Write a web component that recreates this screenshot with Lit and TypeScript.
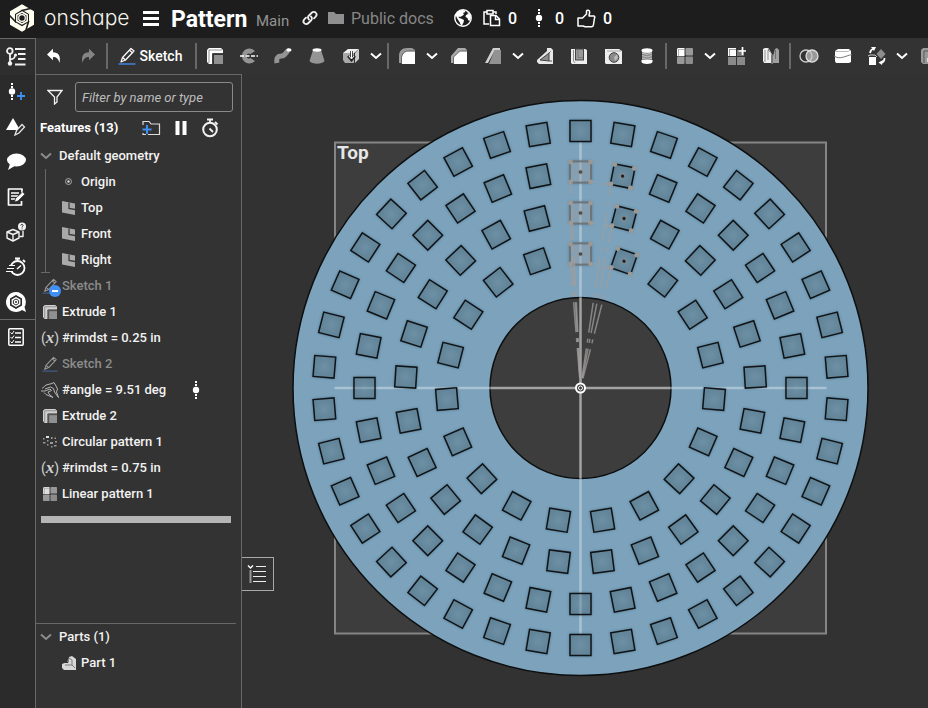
import { LitElement, html, css, svg, TemplateResult } from "lit";
import { customElement, property } from "lit/decorators.js";

const icon = (w: number, h: number, body: unknown, scale = 1) =>
  html`<svg class="ic" width=${Math.round(w * scale)} height=${Math.round(h * scale)} viewBox="0 0 ${w} ${h}" aria-hidden="true">${body}</svg>`;

const G = "#949494";

/* ---------- header icons ---------- */
const logo = icon(26, 28, svg`
  <path d="M13 .3L25 7.200V20.800L13 27.700L1 20.800V7.200Z" fill="#fffff0"/>
  <path d="M13 5.800L20 9.900V18.100L13 22.200L6 18.100V9.900Z" fill="#1d1d1d"/>
  ${[0, 120, 240].map((a) => svg`<path d="M12 6.800L25.500 3.500" stroke="#1d1d1d" stroke-width="1.600" transform="rotate(${a} 13 14)"/>`)}
  <path d="M13 8L18.200 11V17L13 20L7.800 17V11Z" fill="none" stroke="#fffff0" stroke-width="1.500"/>
  <circle cx="13" cy="14" r="3.300" fill="none" stroke="#fffff0" stroke-width="1.200"/>`);
const menuIcon = icon(16, 16, svg`<path d="M0 2.500H16M0 8.500H16M0 14.500H16" stroke="#fff" stroke-width="3"/>`);
const linkIcon = icon(16, 16, svg`<g fill="none" stroke="#eee" stroke-width="1.800" stroke-linecap="round">
  <path d="M7 9.500C5.500 8 6 6.500 7 5.500L9.500 3C11 1.500 13 1.800 13.800 2.800C15 4 14.500 5.800 13.500 6.800L12 8.300"/>
  <path d="M9 6.500C10.500 8 10 9.500 9 10.500L6.500 13C5 14.500 3 14.200 2.200 13.200C1 12 1.500 10.200 2.500 9.200L4 7.700"/></g>`);
const folderIcon = icon(16, 14, svg`<path d="M0 1H6L8 3H16V13H0Z" fill="#8f8f8f"/>`);
const globeIcon = icon(18, 18, svg`<circle cx="9" cy="9" r="8.200" fill="none" stroke="#fff" stroke-width="1.400"/>
  <path d="M1.500 6L4 2.500L8 1L10.500 1.500L11.500 3L9 4L10 5.500L8 7L6 8L4.500 7.500L5 9L7 9.500L10 11L9.500 13.500L8 16.500H7L5.500 13L3.500 10Z" fill="#fff"/>
  <path d="M13 3L16 5.500L17 9L15.500 12L14 11L13.500 9L11.500 8L12 6L14 5Z" fill="#fff"/>`);
const clipIcon = icon(18, 18, svg`<g fill="none" stroke="#fff" stroke-width="1.500">
  <path d="M6 15H1V3H4M10 3H13V5"/><path d="M4 1.500H10V5H4Z"/><path d="M7.500 6.500H13L16.500 10V16.500H7.500Z"/><path d="M12.500 6.500V10.500H16.500"/></g>`);
const versionIcon = icon(8, 20, svg`<circle cx="4" cy="10" r="3.200" fill="#fff"/><path d="M4 1V6M4 14V20" stroke="#fff" stroke-width="2" stroke-dasharray="2 1"/>`);
const thumbIcon = icon(19, 19, svg`<path d="M1 9H5.500L9.500 5V2C10 .8 12.500 1 12.700 3L12 7H17C18 7.500 18 8.500 17.500 9L16.500 15.500C16.300 17 15.500 17.800 14.500 17.800H8L6 17H1Z" fill="none" stroke="#fff" stroke-width="1.500" stroke-linejoin="round"/>`);

/* ---------- toolbar icons ---------- */
const undo = icon(16, 16, svg`<path d="M1 6.500L7 .8V4.300C12.500 4.300 15 8 13.500 15C12.500 10.800 10.500 9 7 9V12.200Z" fill="#fff"/>`);
const redo = icon(16, 16, svg`<path d="M15 6.500L9 .8V4.300C3.500 4.300 1 8 2.500 15C3.500 10.800 5.500 9 9 9V12.200Z" fill="#858585"/>`);
const pencil = (c: string, line: string, scale = 1) => icon(18, 18, svg`<g fill="none" stroke=${c} stroke-width="1.200" stroke-linejoin="round">
  <path d="M3 15L4.500 10.500L13 1.500L16 4L7.500 13Z"/><path d="M4.500 10.500L7.500 13M11.500 3.200L14.500 5.700"/></g><path d="M.5 17H17.500" stroke=${line} stroke-width="1.300"/>`, scale);
const extrude = (a: string, scale = 1) => icon(16, 16, svg`<path d="M0 2L2 0H14L16 2V6H6V16H2L0 14Z" fill=${a}/><path d="M2 2H15M2 2V15" stroke="#666" stroke-width=".700"/><rect x="7" y="7" width="9" height="9" fill="#909090"/><path d="M5.500 16V5.500H16" fill="none" stroke="#444"/>`, scale);
const revolve = icon(18, 16, svg`<path d="M15 3A7.500 7.500 0 1 0 15 13L10.500 10A2.500 2.500 0 1 1 10.500 6Z" fill=${G}/><path d="M7 8H18" stroke="#333" stroke-width="3"/><path d="M0 8H18" stroke="#fff" stroke-width="1.300" stroke-dasharray="4 1.500"/>`);
const sweep = icon(18, 18, svg`<path d="M3 16C2 10.500 4 9 7.500 9C12 9 11.500 4 15 3.500" fill="none" stroke=${G} stroke-width="5"/><ellipse cx="15" cy="3" rx="2.500" ry="1.800" fill="#fff"/>`);
const loft = icon(16, 16, svg`<path d="M4 2H12L15.500 13C13 16.500 3 16.500 .500 13Z" fill=${G}/><ellipse cx="8" cy="2" rx="4.500" ry="1.700" fill="#fff"/>`);
const thicken = icon(18, 16, svg`<path d="M1 5L6 1H17L12 5Z" fill="#eee"/><path d="M1 5H12V15H3L1 12Z" fill="#a8a8a8"/><path d="M13 5L17 1V11L13 15Z" fill="#c8c8c8"/><path d="M9.500 3V9M6 8L9.500 12L13 8" stroke="#222" stroke-width="2.500" fill="none"/><path d="M9.500 3V10M7 8L9.500 11L12 8" stroke="#fff" fill="none"/>`);
const fillet = icon(16, 16, svg`<path d="M0 15V8C0 3 3 0 8 0H13L16 2V4H10C6 4 4 7 4 10V15Z" fill="#999"/><path d="M3 16V10C3 6 6 3.500 9 3.500H16V16Z" fill="#fff"/><path d="M2.500 16V10C2.500 6 6 3 9 3H16" fill="none" stroke="#555" stroke-width=".700"/>`);
const chamfer = icon(16, 16, svg`<path d="M0 8L7 0H14L16 2V4H9L4 10V15H0Z" fill="#aaa"/><path d="M3 16V9L9 3.500H16V16Z" fill="#fff"/><path d="M2.500 16V9L8.500 3H16" fill="none" stroke="#555" stroke-width=".700"/>`);
const draft = icon(16, 16, svg`<path d="M8 0H15V2H10L3 15H0Z" fill="#d0d0d0"/><path d="M9.500 2H16V16H4Z" fill="#929292"/>`);
const rib = icon(16, 16, svg`<path d="M0 12L10 3V0H14L16 2V16H2L0 14Z" fill="#e8e8e8"/><path d="M3 12L12 5V13Z" fill="#8a8a8a" stroke="#444"/><path d="M12 5L13.500 3.500M12 13H15" stroke="#555"/>`);
const shell = icon(16, 16, svg`<path d="M0 1H14L16 2V16H1L0 15Z" fill="#eee"/><rect x="4.500" y="1" width="8" height="11" fill="#999" stroke="#444"/><path d="M7 2V9.500H12M2.500 2V13L4 15" stroke="#777" fill="none" stroke-width=".800"/>`);
const hole = icon(17, 16, svg`<path d="M0 1H14L17 3V16H1L0 15Z" fill="#eee"/><path d="M2 3H16" stroke="#888" stroke-width=".700"/><circle cx="9" cy="9.500" r="4.800" fill="#8a8a8a" stroke="#444"/><path d="M9 9L12 6.500L13 10L10 13Z" fill="#bbb"/>`);
const thread = icon(12, 16, svg`<rect x="1" y="3" width="10" height="10" fill="#8a8a8a"/><ellipse cx="6" cy="2.500" rx="5.500" ry="2.300" fill="#fff"/><path d="M.5 12V14C1 16.500 11 16.500 11.500 14V12Z" fill="#fff"/><path d="M1 5Q6 8 11 5M1 7.500Q6 10.500 11 7.500M1 10Q6 13 11 10" fill="none" stroke="#c4c4c4"/>`);
const grid = (a: string, scale = 1) => icon(16, 16, svg`<path d="M0 1L1 0H7.500V8H0Z" fill=${a}/><rect x="8.500" y="0" width="7.500" height="7.500" rx="1" fill="#999"/><rect x="0" y="8.500" width="7.500" height="7.500" rx="1" fill="#999"/><rect x="8.500" y="8.500" width="7.500" height="7.500" rx="1" fill="#8c8c8c"/><path d="M1 1.500H7M1.500 1.500V8" stroke="#888" stroke-width=".600"/>`, scale);
const gridPlus = icon(18, 18, svg`<rect x="0" y="1" width="8" height="8" fill="#fff"/><path d="M1 2.500H8M1.500 2V9" stroke="#888" stroke-width=".800"/><rect x="9" y="3" width="7" height="6" fill="#777"/><rect x="0" y="10" width="8" height="8" fill="#8a8a8a"/><rect x="9" y="10" width="8" height="8" fill="#8a8a8a"/><path d="M14.500 0V8M10.500 4H18" stroke="#fff" stroke-width="1.700"/>`);
const mirror = icon(16, 18, svg`<path d="M0 2L2 1H5V3L8 6V16H1L0 14Z" fill="#f0f0f0"/><path d="M2 3V15M5 3V13" stroke="#777" stroke-width=".800"/><path d="M10 9L12 2L14 1L16 3V16H10Z" fill="#a0a0a0"/><path d="M12.500 3V12" stroke="#666" stroke-width=".800"/><path d="M5 1L9 8V17" stroke="#bbb" fill="none"/>`);
const boolIcon = icon(20, 14, svg`<circle cx="13" cy="7" r="6" fill="#999"/><circle cx="7" cy="7" r="6" fill="none" stroke="#ccc" stroke-width="1.300"/><circle cx="13" cy="7" r="6" fill="none" stroke="#ddd" stroke-width="1.300"/>`);
const split = icon(18, 16, svg`<path d="M1 3L4 1H15L17 3V14L15 15H2L1 13Z" fill="#fff"/><path d="M1 3.500H14L16 2" stroke="#aaa" stroke-width=".800" fill="none"/><path d="M0 8C6 12 11 8 18 6.500" stroke="#777" fill="none"/>`);
const transform = icon(18, 18, svg`<rect x="1" y="10" width="7" height="8" fill="#fff"/><path d="M0 9L2 8H7L9 10" fill="none" stroke="#ccc"/><path d="M13 2L17.500 7L13 12L8.500 7Z" fill="#8d8d8d"/><path d="M2 6C2.500 3 4 2 6 1.500" fill="none" stroke="#fff" stroke-width="1.800"/><path d="M3 0H8L6 4Z" fill="#fff"/><path d="M16.500 11C16.500 14 15 15.500 13 16" fill="none" stroke="#fff" stroke-width="1.800"/><path d="M14 18L10.500 15.500L15 13Z" fill="#fff"/>`);
const box = icon(16, 16, svg`<path d="M0 2L2 0H14L16 2V16H2L0 14Z" fill="#999"/><path d="M3 3H16M3 3V15" stroke="#555"/><path d="M6 10H14V14H6Z" fill="#ddd"/>`);
const chev = (c: string) => icon(12, 8, svg`<path d="M1 1.500L6 6L11 1.500" fill="none" stroke=${c} stroke-width="2"/>`);

/* ---------- rail icons ---------- */
const railTree = icon(20, 20, svg`<g fill="none" stroke="#f2f2f2" stroke-width="1.800"><circle cx="3.800" cy="4" r="2.800"/><path d="M4 7V18M4 12.500C8 12 9 11 9 8"/><path d="M9 2H19.500M12 7H19.500M12 12H19.500M9 17.500H19.500"/></g><circle cx="4" cy="16.500" r="2.200" fill="#f2f2f2"/><circle cx="9.500" cy="8" r="1.600" fill="#f2f2f2"/>`);
const railVersion = icon(20, 20, svg`<circle cx="6" cy="9.500" r="3.200" fill="#fff"/><path d="M6 1V6M6 13V19" stroke="#fff" stroke-width="2" stroke-dasharray="2 1"/><path d="M15 10V18M11 14H19" stroke="#3f8ff5" stroke-width="1.800"/>`);
const railAppearance = icon(20, 20, svg`<path d="M7 1L14 13H0Z" fill="#fff"/><path d="M9 18L10.500 13.500L16 7.500L18.500 10L13 16Z" fill="#2b2b2b" stroke="#e8e8e8" stroke-width="1.300"/>`);
const railComment = icon(20, 18, svg`<ellipse cx="10.500" cy="7" rx="9.500" ry="6.500" fill="#fff"/><path d="M4 11L2 17L9.500 12.500Z" fill="#fff"/>`);
const railNotes = icon(18, 18, svg`<path d="M15 6V1H1.500V17H14.500V13" fill="none" stroke="#fff" stroke-width="1.700" stroke-linejoin="round"/><path d="M4 5H12M4 8H11M4 11H8" stroke="#fff" stroke-width="1.500"/><path d="M7.500 14L8.500 10.500L15.500 4L18 6L11 13Z" fill="#fff" stroke="#2b2b2b" stroke-width=".700"/>`);
const railCube = icon(20, 20, svg`<g fill="none" stroke="#f2f2f2" stroke-width="1.400" stroke-linejoin="round"><path d="M1 10L7 7.500L13 10V16L7 19L1 16Z"/><path d="M1 10L7 12.500L13 10M7 12.500V19M13.500 14.500H17V9"/></g><circle cx="16" cy="4.500" r="4" fill="#f2f2f2"/><path d="M14.700 3.500C14.900 1.800 17.500 2.200 17 3.800C16.800 4.500 16 4.600 16 5.500M16 6.500V7.400" stroke="#2b2b2b" fill="none"/>`);
const railTimer = icon(20, 20, svg`<circle cx="11.500" cy="11" r="7" fill="none" stroke="#fff" stroke-width="1.800"/><path d="M9 1.500H14M11.500 2V4M17 3L19 5" stroke="#fff" stroke-width="1.800"/><path d="M0 10H7M0 13H7" stroke="#2b2b2b" stroke-width="2"/><path d="M3 8.500H9M1 11.500H8M0 14.500H7" stroke="#fff" stroke-width="1.200"/><path d="M11 12L15 8.500" stroke="#fff" stroke-width="1.500"/>`);
const railLearn = icon(20, 20, svg`<path d="M10 0A10 10 0 1 0 16 18L20 20L18.500 15A10 10 0 0 0 10 0Z" fill="#fff"/><path d="M10 4L15.200 7V13L10 16L4.800 13V7Z" fill="none" stroke="#2b2b2b" stroke-width="1.600"/><path d="M10 7L12.600 8.500V11.500L10 13L7.400 11.500V8.500Z" fill="none" stroke="#2b2b2b"/><circle cx="10" cy="10" r="1" fill="#2b2b2b"/>`);
const railChecklist = icon(16, 18, svg`<rect x=".8" y=".8" width="14.400" height="16.400" rx="1" fill="none" stroke="#fff" stroke-width="1.500"/><path d="M7 5H13M7 9.500H13M7 14H13" stroke="#fff" stroke-width="1.500"/><path d="M2.500 4.500L4 6L6 3M2.500 9L4 10.500L6 7.500M2.500 13.500L4 15L6 12" stroke="#fff" fill="none"/>`);

/* ---------- panel icons ---------- */
const funnel = icon(16, 16, svg`<path d="M1 1.500H15L10 8V13L7.500 15V8Z" fill="none" stroke="#f2f2f2" stroke-width="1.300"/>`);
const addFolder = icon(20, 16, svg`<path d="M2 5V1.500H8L10 4H18.500V14.500H7M2 13V14.500H5" fill="none" stroke="#ddd" stroke-width="1.200"/><path d="M6 5V14M1.500 9.500H10.500" stroke="#3f8ff5" stroke-width="2"/>`);
const pause = icon(12, 14, svg`<path d="M2.500 0V14M9.500 0V14" stroke="#fff" stroke-width="4"/>`);
const stopwatch = icon(18, 20, svg`<circle cx="9" cy="11.500" r="6.800" fill="none" stroke="#f2f2f2" stroke-width="2"/><path d="M6 1.500H12M9 1V5M14 4L16.500 6.500M8.500 10.500L12 14" stroke="#f2f2f2" stroke-width="1.800"/>`);
const origin = icon(14, 14, svg`<circle cx="6.500" cy="6.500" r="3" fill="none" stroke="#aaa"/><circle cx="6.500" cy="6.500" r="1.200" fill="#ddd"/>`);
const plane = icon(14, 14, svg`<path d="M0 0L13 2.500V14L0 11.500Z" fill="#a9a9a9"/><path d="M7 1.500V7.500L13 8.500" fill="none" stroke="#3a3a3a" stroke-width="1.300"/>`);
const variable = html`<span class="var">(<i>x</i>)</span>`;
const caliper = icon(18, 16, svg`<g fill="none" stroke="#b5b5b5" stroke-linejoin="round"><path d="M1 6.500L5 3L11 1.500L13 .500L15 4L16.500 7L15.500 10L17.500 15.500L13.500 10L12.500 6.500L9.500 5L4 7"/><path d="M0 9H4L9 7L10.500 8.500L7 10L8 12L12 15.500L5 12.500L3 10.500"/></g>`);
const circPattern = icon(16, 14, svg`<g fill="#999"><rect x="1" y="3" width="1.500" height="1.500"/><rect x="4" y="1" width="3" height="2" fill="#ddd"/><rect x="1" y="7" width="2.500" height="1.500"/><rect x="5" y="5" width="1.500" height="1.500"/><rect x="9" y="2" width="1.500" height="2"/><rect x="12.500" y="2.500" width="1.500" height="1.500"/><rect x="8" y="7" width="3" height="2"/><rect x="13" y="6" width="2" height="1.500"/><rect x="12" y="10" width="2.500" height="1.500"/><rect x="5" y="9" width="1.500" height="1.500"/><rect x="9" y="11" width="1.500" height="1.500"/></g>`);
const partIcon = icon(14, 14, svg`<path d="M0 8L5 6L7 1L10 0L14 3V14H2L0 12Z" fill="#d8d8d8"/><path d="M0 6.500H6V0" stroke="#333" fill="none"/><path d="M10 4V9H3M10 9L13 12M7 2L10 4" stroke="#666" stroke-width=".800" fill="none"/>`);
const outline = icon(20, 20, svg`<path d="M1 1.500L3.500 4L6 1.500" fill="none" stroke="#fff" stroke-width="1.400"/><path d="M3.500 6V19" stroke="#999" stroke-width="2"/><path d="M9 2.500H19M6 7.500H19M6 12.500H19M6 17.500H19" stroke="#eee" stroke-width="1.200"/>`);

type Tool = { label: string; pic?: TemplateResult; menu?: boolean; sep?: boolean };
const TOOLS: Tool[] = [
  { label: "", sep: true },
  { label: "Extrude", pic: extrude("#fff") },
  { label: "Revolve", pic: revolve },
  { label: "Sweep", pic: sweep },
  { label: "Loft", pic: loft },
  { label: "Thicken", pic: thicken, menu: true },
  { label: "", sep: true },
  { label: "Fillet", pic: fillet, menu: true },
  { label: "Chamfer", pic: chamfer },
  { label: "Draft", pic: draft, menu: true },
  { label: "Rib", pic: rib },
  { label: "Shell", pic: shell },
  { label: "Hole", pic: hole },
  { label: "External thread", pic: thread },
  { label: "", sep: true },
  { label: "Linear pattern", pic: grid("#fff"), menu: true },
  { label: "Add pattern", pic: gridPlus },
  { label: "Mirror", pic: mirror },
  { label: "", sep: true },
  { label: "Boolean", pic: boolIcon },
  { label: "Split", pic: split },
  { label: "Transform", pic: transform, menu: true },
  { label: "More", pic: box },
];

const SMALL = 0.875;
type Feature = { text: string; pic: TemplateResult; dim?: boolean; hidden?: boolean; mark?: boolean };
const FEATURES: Feature[] = [
  { text: "Sketch 1", pic: pencil("#999", "#41618c", SMALL), dim: true, hidden: true },
  { text: "Extrude 1", pic: extrude("#d0d0d0", SMALL) },
  { text: "#rimdst = 0.25 in", pic: variable },
  { text: "Sketch 2", pic: pencil("#999", "#41618c", SMALL), dim: true },
  { text: "#angle = 9.51 deg", pic: caliper, mark: true },
  { text: "Extrude 2", pic: extrude("#d0d0d0", SMALL) },
  { text: "Circular pattern 1", pic: circPattern },
  { text: "#rimdst = 0.75 in", pic: variable },
  { text: "Linear pattern 1", pic: grid("#ddd", SMALL) },
];

const RAIL: [string, TemplateResult][] = [
  ["Versions", railVersion],
  ["Appearance", railAppearance],
  ["Comments", railComment],
  ["Notes", railNotes],
  ["Part help", railCube],
  ["Performance", railTimer],
  ["Learning", railLearn],
];

@customElement("app-header")
class AppHeader extends LitElement {
  static styles = css`
    :host { display: flex; align-items: center; box-sizing: border-box; height: 38px; padding: 0 0 2px 9px; background: #1d1d1d; color: #fff; font-family: Roboto, sans-serif; white-space: nowrap; overflow: hidden; }
    .ic { display: block; flex: none; }
    button, a { display: flex; align-items: center; border: 0; padding: 0; background: none; color: inherit; font: inherit; text-decoration: none; flex: none; }
    .brand { gap: 9px; width: 134px; }
    .word { font: 300 21px/28px Inter, sans-serif; font-feature-settings: "cv11"; color: #f4f4ec; }
    h1 { margin: 0 0 0 12px; padding-top: 3px; width: 85px; font-size: 23px; line-height: 28px; font-weight: 700; }
    .branch { width: 46px; padding-top: 6px; font-size: 15px; color: #949494; }
    .folder { margin-left: 10px; gap: 7px; width: 126px; font-size: 16px; color: #878787; }
    .stat { font-size: 16px; font-weight: 500; gap: 7px; }
    .clip { margin-left: 11px; width: 52px; }
    .vers { width: 42px; gap: 12px; }
  `;
  render() {
    return html`
      <a class="brand" href="#home">${logo}<span class="word">onshape</span></a>
      <button aria-label="Menu">${menuIcon}</button>
      <h1>Pattern</h1><span class="branch">Main</span>
      <button aria-label="Copy link">${linkIcon}</button>
      <a class="folder" href="#docs">${folderIcon}Public docs</a>
      <button aria-label="Public document">${globeIcon}</button>
      <button class="stat clip" aria-label="Copies: 0">${clipIcon}0</button>
      <button class="stat vers" aria-label="Versions: 0">${versionIcon}0</button>
      <button class="stat" aria-label="Likes: 0">${thumbIcon}0</button>`;
  }
}

@customElement("app-toolbar")
class AppToolbar extends LitElement {
  static styles = css`
    :host { display: flex; align-items: center; box-sizing: border-box; height: 37px; padding: 0 0 1px 1px; background: #333; color: #fff; font-family: Roboto, sans-serif; overflow: hidden; }
    .ic { display: block; flex: none; }
    button { display: flex; align-items: center; justify-content: center; flex: none; width: 34px; height: 36px; border: 0; padding: 0; background: none; color: inherit; font: 500 14px/20px Roboto, sans-serif; }
    .menu { width: 18px; padding-right: 2px; }
    .sketch { width: 85px; gap: 4px; padding-right: 3px; }
    .sep { flex: none; width: 2px; height: 26px; margin: 0 1px; background: #686868; }
  `;
  render() {
    return html`
      <button aria-label="Undo">${undo}</button>
      <button aria-label="Redo">${redo}</button>
      <span class="sep"></span>
      <button class="sketch">${pencil("#fff", "#3f8ff5")}Sketch</button>
      ${TOOLS.map((t) => t.sep ? html`<span class="sep"></span>` : html`
        <button aria-label=${t.label}>${t.pic}</button>
        ${t.menu ? html`<button class="menu" aria-label="${t.label} options">${chev("#fff")}</button>` : ""}`)}`;
  }
}

@customElement("feature-panel")
class FeaturePanel extends LitElement {
  static styles = css`
    :host { display: flex; flex-direction: column; box-sizing: border-box; border-right: 1px solid #686868; border-top: 1px solid #686868; background: #333; color: #f2f2f2; font: 500 13px/26px Roboto, sans-serif; }
    .ic { display: block; flex: none; }
    button { display: flex; align-items: center; border: 0; padding: 0; background: none; color: inherit; font: inherit; }
    .filter { display: flex; align-items: center; gap: 12px; padding: 7px 8px 0 11px; }
    input { flex: 1; min-width: 0; height: 30px; box-sizing: border-box; border: 1px solid #8a8a8a; border-radius: 3px; background: #333; padding: 0 6px; color: #eee; font: italic 400 13px/20px Roboto, sans-serif; }
    input::placeholder { color: #bdbdbd; opacity: 1; }
    .head { display: flex; align-items: center; height: 31px; padding: 0 0 0 4px; }
    h2 { margin: 0; font: inherit; color: #fff; }
    .head h2 { width: 101px; font-weight: 700; }
    .tools { display: flex; align-items: center; gap: 14px; }
    ul { list-style: none; margin: 0; padding: 0; }
    .row { display: flex; align-items: center; gap: 3px; height: 26px; padding-left: 5px; white-space: nowrap; }
    .group { gap: 7px; padding-left: 4px; }
    .slot { position: relative; display: flex; align-items: center; justify-content: center; flex: none; width: 18px; height: 18px; }
    .kids { margin: 0 0 0 9px; border-left: 1px solid #686868; position: relative; }
    .kids::after { content: ""; position: absolute; left: -5px; bottom: 0; width: 9px; height: 1px; background: #686868; }
    .kids .row { padding-left: 14px; }
    .dim { color: #8b8b8b; }
    .badge { position: absolute; right: -2px; bottom: -2px; width: 12px; height: 12px; border-radius: 50%; background: #3f8ff5; display: flex; align-items: center; justify-content: center; }
    .badge::after { content: ""; width: 6px; height: 2px; background: #fff; }
    .mark { margin: 0 41px 0 auto; }
    .var { font: 400 14px/18px Roboto, sans-serif; color: #d0d0d0; }
    .var i { font: italic 700 17px/16px "Liberation Serif", serif; }
    .rollback { height: 7px; margin: 9px 10px 0 5px; background: #b5b5b5; }
    .features { flex: 1; }
    .parts { min-height: 84px; border-top: 1px solid #686868; margin-right: 5px; }
    .parts .kid { padding-left: 24px; }
  `;
  render() {
    return html`
      <label class="filter">${funnel}<input type="text" placeholder="Filter by name or type" aria-label="Filter by name or type" /></label>
      <div class="head"><h2>Features (13)</h2>
        <div class="tools"><button aria-label="Add folder">${addFolder}</button><button aria-label="Pause">${pause}</button><button aria-label="Regeneration times">${stopwatch}</button></div>
      </div>
      <section class="features">
        <button class="row group">${chev("#8d8d8d")}Default geometry</button>
        <ul class="kids">
          <li class="row"><span class="slot">${origin}</span>Origin</li>
          ${["Top", "Front", "Right"].map((n) => html`<li class="row"><span class="slot">${plane}</span>${n}</li>`)}
        </ul>
        <ul>
          ${FEATURES.map((f) => html`<li class="row ${f.dim ? "dim" : ""}"><span class="slot">${f.pic}${f.hidden ? html`<span class="badge"></span>` : ""}</span>${f.text}${f.mark ? html`<span class="mark">${versionIcon}</span>` : ""}</li>`)}
        </ul>
        <div class="rollback"></div>
      </section>
      <section class="parts">
        <button class="row group">${chev("#8d8d8d")}Parts (1)</button>
        <ul><li class="row kid"><span class="slot">${partIcon}</span>Part 1</li></ul>
      </section>`;
  }
}

/* Each ring of pockets: radius from the disc centre and number of copies. */
const RINGS = [
  { r: 257, n: 38 },
  { r: 216, n: 32 },
  { r: 175, n: 25 },
  { r: 134, n: 19 },
];

@customElement("model-view")
class ModelView extends LitElement {
  @property({ type: String }) plane = "Top";
  static styles = css`
    :host { display: block; position: relative; background: #323232; overflow: hidden; }
    .scene { display: block; width: 100%; height: 100%; }
    .label { font: 700 19px Roboto, sans-serif; fill: #e6e6e6; }
    .tab { position: absolute; left: -1px; bottom: 117px; display: flex; align-items: center; justify-content: center; width: 33px; height: 34px; border: 1px solid #a8a8a8; border-left: 0; padding: 0; background: #333; }
  `;
  private ring(r: number, n: number, first: boolean) {
    return Array.from({ length: n }, (_, i) => {
      const sketched = !first && i === 0;
      const s = svg`<rect x="-11" y=${-r - 11} width="22" height="22" fill="#3f6076" fill-opacity=".75" filter="url(#soft)"/>
        <rect x="-10.5" y=${-r - 10.5} width="21" height="21" fill=${sketched ? "#86a0b1" : "url(#pocket)"} stroke=${sketched ? "#6d7579" : "#101416"} stroke-width=${sketched ? 2 : 1.5}/>`;
      const pts = !first && i < 2
        ? svg`${[[-10, -10], [10, -10], [-10, 10], [10, 10]].map(([x, y]) => svg`<circle cx=${x} cy=${y - r} r="2.400" fill="#9c9894"/>`)}
          <circle cx="0" cy=${-r} r="2.500" fill="#8d8d8d"/><circle cx="0" cy=${-r} r="1.700" fill="#222"/>`
        : "";
      return svg`<g transform="rotate(${(360 / n) * i})">${s}${pts}</g>`;
    });
  }
  private guides() {
    return RINGS.slice(1).map(({ r, n }) => {
      const a = (2 * Math.PI) / n;
      const x = -10 * Math.cos(a) + (r - 10) * Math.sin(a);
      const y = -10 * Math.sin(a) - (r - 10) * Math.cos(a);
      const ray = (px: number, py: number) => {
        const d = Math.hypot(px, py);
        return svg`<path d="M${(px / d) * 10} ${(py / d) * 10}L${px} ${py}"/>`;
      };
      return svg`<g fill="none" stroke="#a09e9c" stroke-opacity=".75" stroke-width="1.500">
        <g stroke-dasharray="30 6 4 6">${ray(-10, -(r - 10))}${ray(x, y)}</g><path d="M${x - 9} ${y}H${x}M10 ${-(r - 10)}h4"/></g>`;
    });
  }
  render() {
    return html`
      <svg class="scene" viewBox="0 0 686 633" role="img" aria-label="Patterned disc, ${this.plane} plane">
        <defs>
          <radialGradient id="pocket"><stop offset="0" stop-color="#6d90a5"/><stop offset="1" stop-color="#628499"/></radialGradient>
          <filter id="soft" x="-30%" y="-30%" width="160%" height="160%"><feGaussianBlur stdDeviation="1.8"/></filter>
        </defs>
        <rect x="93" y="67.500" width="491" height="491" fill="#3d3d3d" stroke="#858585" stroke-width="2"/>
        <g transform="translate(338.500 313)">
          <path fill-rule="evenodd" d="M0-287.500A287.500 287.500 0 1 1 0 287.500A287.500 287.500 0 1 1 0-287.500ZM0-90.500A90.500 90.500 0 1 0 0 90.500A90.500 90.500 0 1 0 0-90.500Z" fill="#7ca2bc" stroke="#0d0f10" stroke-width="1.500"/>
          <g stroke="#d8e4ec" stroke-opacity=".5" stroke-width="2.500"><path d="M0-246V-90M0 90V246M-246 0H-90M90 0H246"/></g>
          ${RINGS.map(({ r, n }, k) => this.ring(r, n, k === 0))}
          <g stroke="#d8e4ec" stroke-opacity=".25" stroke-width="2.500"><path d="M0-226V-206M0-185V-165M0-144V-124M0 206V226M-226 0H-206M206 0H226"/></g>
          <g stroke="#a3a3a3" stroke-width="2.500"><path d="M0-90V90M-90 0H90"/></g>
          ${this.guides()}
          <circle r="4.500" fill="#3d3d3d" stroke="#fff" stroke-width="2"/><circle r="2" fill="#3d3d3d" stroke="#fff"/>
        </g>
        <text class="label" x="95" y="84">${this.plane}</text>
      </svg>
      <button class="tab" aria-label="Show tables">${outline}</button>`;
  }
}

@customElement("app-root")
class AppRoot extends LitElement {
  static styles = css`
    :host { display: grid; grid-template: auto auto minmax(0, 1fr) / 36px 206px minmax(0, 1fr); min-height: 100vh; background: #2b2b2b; }
    app-header { grid-column: 1 / -1; }
    .toggle, .rail button { display: flex; align-items: center; justify-content: center; border: 0; padding: 0 3px 0 0; background: none; }
    .toggle { background: #2e2e2e; border-top: 1px solid #686868; border-right: 1px solid #686868; }
    .ic { display: block; }
    app-toolbar { grid-column: 2 / -1; min-width: 0; }
    .rail { display: flex; flex-direction: column; margin-top: -1px; border-right: 1px solid #686868; }
    .rail button { height: 35px; }
    .rail .last { border-top: 1px solid #686868; }
    model-view { min-height: 0; height: calc(100vh - 75px); }
    feature-panel { margin-top: -1px; }
  `;
  render() {
    return html`
      <app-header></app-header>
      <button class="toggle" aria-label="Feature list">${railTree}</button>
      <app-toolbar></app-toolbar>
      <nav class="rail">
        ${RAIL.map(([l, p]) => html`<button aria-label=${l}>${p}</button>`)}
        <button class="last" aria-label="Checklist">${railChecklist}</button>
      </nav>
      <feature-panel></feature-panel>
      <model-view></model-view>`;
  }
}
